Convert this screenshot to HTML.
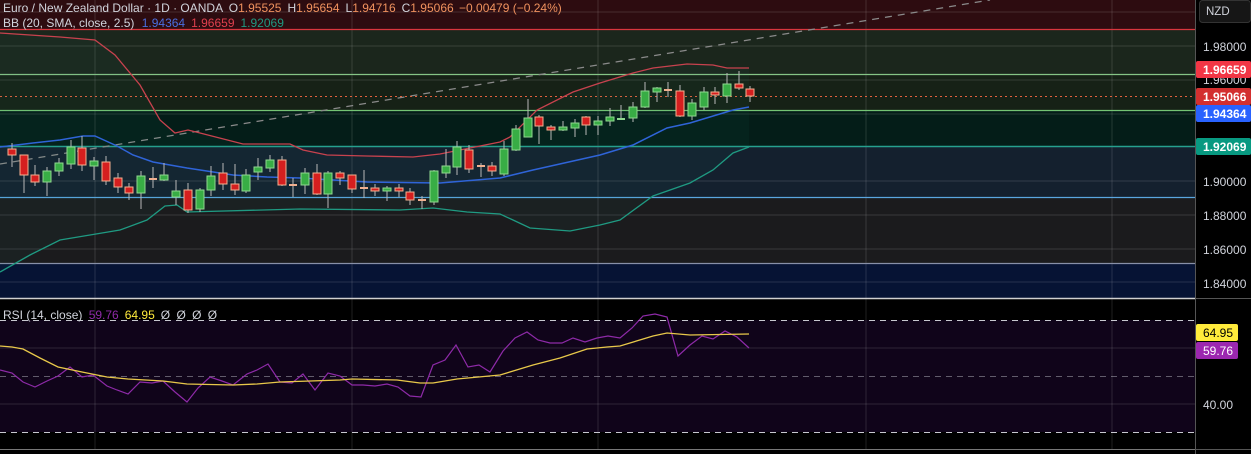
<!DOCTYPE html>
<html><head><meta charset="utf-8"><style>
html,body{margin:0;padding:0;background:#000;width:1251px;height:454px;overflow:hidden}
svg{display:block}
text{font-family:"Liberation Sans",sans-serif}
.w{stroke:#b8b8b8;stroke-width:1}
.g{fill:#38ad45;stroke:#8fd890;stroke-width:1}
.r{fill:#d51f1f;stroke:#f2b090;stroke-width:1}
.d{stroke:#f0b090;stroke-width:2}
.grid{stroke:#ffffff;stroke-opacity:.13;stroke-width:1}
</style></head><body>
<svg width="1251" height="454" viewBox="0 0 1251 454" xmlns="http://www.w3.org/2000/svg">
<rect x="0" y="0" width="1195" height="29" fill="#2d0c10"/>
<rect x="0" y="29" width="1195" height="45" fill="#1b261c"/>
<rect x="0" y="74" width="1195" height="36" fill="#162116"/>
<rect x="0" y="110" width="1195" height="36" fill="#041d18"/>
<rect x="0" y="146" width="1195" height="51" fill="#14202e"/>
<rect x="0" y="197" width="1195" height="66" fill="#1b1b1d"/>
<rect x="0" y="263" width="1195" height="35" fill="#061334"/>
<rect x="0" y="299" width="1195" height="155" fill="#000"/>
<rect x="0" y="320" width="1195" height="112" fill="#10041a"/>
<g class="grid">
<line x1="0" y1="12" x2="1195" y2="12"/><line x1="0" y1="46" x2="1195" y2="46"/><line x1="0" y1="80" x2="1195" y2="80"/><line x1="0" y1="114" x2="1195" y2="114"/><line x1="0" y1="181" x2="1195" y2="181"/><line x1="0" y1="215" x2="1195" y2="215"/><line x1="0" y1="249" x2="1195" y2="249"/><line x1="0" y1="282" x2="1195" y2="282"/>
<line x1="0" y1="348" x2="1195" y2="348"/><line x1="0" y1="404" x2="1195" y2="404"/>
<line x1="95" y1="0" x2="95" y2="449"/><line x1="352" y1="0" x2="352" y2="449"/><line x1="598" y1="0" x2="598" y2="449"/><line x1="866" y1="0" x2="866" y2="449"/><line x1="1112" y1="0" x2="1112" y2="449"/>
</g>
<line x1="0" y1="29.5" x2="1195" y2="29.5" stroke="#d9363e" stroke-width="1.2"/>
<line x1="0" y1="74.5" x2="1195" y2="74.5" stroke="#86c486" stroke-width="1.2"/>
<line x1="0" y1="110.5" x2="1195" y2="110.5" stroke="#74c474" stroke-width="1.2"/>
<line x1="0" y1="146.5" x2="1195" y2="146.5" stroke="#26a08e" stroke-width="1.5"/>
<line x1="0" y1="197.5" x2="1195" y2="197.5" stroke="#5aa6e0" stroke-width="1.2"/>
<line x1="0" y1="263.5" x2="1195" y2="263.5" stroke="#8890a8" stroke-width="1.2"/>
<line x1="0" y1="298.5" x2="1195" y2="298.5" stroke="#d0d0d0" stroke-width="1.5"/>
<line x1="0" y1="449.5" x2="1195" y2="449.5" stroke="#777" stroke-width="1"/>
<g stroke="#c8c8d0" stroke-dasharray="6,5" stroke-width="1">
<line x1="0" y1="320.5" x2="1195" y2="320.5"/><line x1="0" y1="432.5" x2="1195" y2="432.5"/>
<line x1="0" y1="376.5" x2="1195" y2="376.5" stroke-opacity=".45"/>
</g>
<line x1="0" y1="164" x2="990" y2="0" stroke="#8a8a8a" stroke-dasharray="7,6" stroke-width="1.3"/>
<line x1="0" y1="96.5" x2="1195" y2="96.5" stroke="#e2603e" stroke-dasharray="2,3" stroke-width="1"/>
<polygon fill="#2a8a7a" fill-opacity=".06" points="0,33 60,37 95,40 115,55 140,85 160,120 175,133 188,130 200,133 243,144 290,144 303,150 327,155 367,156 413,157 440,154 500,142 510,137 537,110 573,92 600,83 633,73 653,68 687,64 713,65 727,68 749,68 749,147 733,153 713,170 690,183 653,196 620,220 570,231 530,228 513,220 500,214 467,212 433,208 400,210 300,209 187,212 177,205 165,206 147,220 120,230 90,235 60,240 30,255 0,272"/>
<polyline fill="none" stroke="#c8424e" stroke-width="1.3" points="0,33 60,37 95,40 115,55 140,85 160,120 175,133 188,130 200,133 243,144 290,144 303,150 327,155 367,156 413,157 440,154 500,142 510,137 537,110 573,92 600,83 633,73 653,68 687,64 713,65 727,68 749,68"/>
<polyline fill="none" stroke="#2f64d8" stroke-width="1.5" points="0,147 33,143 60,140 83,136 95,136 117,146 133,155 153,162 187,168 233,175 267,177 300,178 333,180 367,182 440,183 500,178 533,170 600,155 633,145 667,128 690,123 733,110 749,107"/>
<polyline fill="none" stroke="#1f9a82" stroke-width="1.3" points="0,272 30,255 60,240 90,235 120,230 147,220 165,206 177,205 187,212 300,209 400,210 433,208 467,212 500,214 513,220 530,228 570,231 600,225 620,220 653,196 690,183 713,170 733,153 749,147"/>
<g>
<line class="w" x1="12" y1="143" x2="12" y2="167"/><rect class="r" x="8" y="149" width="8" height="6"/>
<line class="w" x1="24" y1="156" x2="24" y2="193"/><rect class="r" x="20" y="155" width="8" height="20"/>
<line class="w" x1="35" y1="165" x2="35" y2="186"/><rect class="r" x="31" y="175" width="8" height="7"/>
<line class="w" x1="47" y1="167" x2="47" y2="196"/><rect class="g" x="43" y="171" width="8" height="11"/>
<line class="w" x1="59" y1="158" x2="59" y2="176"/><rect class="g" x="55" y="163" width="8" height="8"/>
<line class="w" x1="71" y1="140" x2="71" y2="169"/><rect class="g" x="67" y="147" width="8" height="17"/>
<line class="w" x1="82" y1="136" x2="82" y2="171"/><rect class="r" x="78" y="148" width="8" height="17"/>
<line class="w" x1="94" y1="157" x2="94" y2="180"/><rect class="g" x="90" y="161" width="8" height="5"/>
<line class="w" x1="106" y1="156" x2="106" y2="185"/><rect class="r" x="102" y="162" width="8" height="19"/>
<line class="w" x1="118" y1="173" x2="118" y2="193"/><rect class="r" x="114" y="178" width="8" height="9"/>
<line class="w" x1="129" y1="183" x2="129" y2="200"/><rect class="r" x="125" y="187" width="8" height="6"/>
<line class="w" x1="141" y1="171" x2="141" y2="209"/><rect class="g" x="137" y="176" width="8" height="17"/>
<line class="w" x1="153" y1="167" x2="153" y2="188"/><line class="d" x1="149" y1="179" x2="157" y2="179"/>
<line class="w" x1="164" y1="163" x2="164" y2="181"/><rect class="g" x="160" y="175" width="8" height="5"/>
<line class="w" x1="176" y1="180" x2="176" y2="205"/><rect class="g" x="172" y="191" width="8" height="6"/>
<line class="w" x1="188" y1="183" x2="188" y2="213"/><rect class="r" x="184" y="190" width="8" height="20"/>
<line class="w" x1="200" y1="188" x2="200" y2="212"/><rect class="g" x="196" y="190" width="8" height="19"/>
<line class="w" x1="211" y1="166" x2="211" y2="196"/><rect class="g" x="207" y="176" width="8" height="14"/>
<line class="w" x1="223" y1="163" x2="223" y2="190"/><rect class="r" x="219" y="173" width="8" height="11"/>
<line class="w" x1="235" y1="164" x2="235" y2="195"/><rect class="r" x="231" y="184" width="8" height="6"/>
<line class="w" x1="246" y1="169" x2="246" y2="193"/><rect class="g" x="242" y="175" width="8" height="16"/>
<line class="w" x1="258" y1="158" x2="258" y2="180"/><rect class="g" x="254" y="167" width="8" height="5"/>
<line class="w" x1="270" y1="155" x2="270" y2="172"/><rect class="g" x="266" y="160" width="8" height="8"/>
<line class="w" x1="282" y1="156" x2="282" y2="186"/><rect class="r" x="278" y="160" width="8" height="25"/>
<line class="w" x1="293" y1="178" x2="293" y2="197"/><line class="d" x1="289" y1="185" x2="297" y2="185"/>
<line class="w" x1="305" y1="168" x2="305" y2="194"/><rect class="g" x="301" y="173" width="8" height="12"/>
<line class="w" x1="317" y1="164" x2="317" y2="195"/><rect class="r" x="313" y="173" width="8" height="21"/>
<line class="w" x1="328" y1="171" x2="328" y2="208"/><rect class="g" x="324" y="173" width="8" height="21"/>
<line class="w" x1="340" y1="171" x2="340" y2="185"/><rect class="r" x="336" y="173" width="8" height="5"/>
<line class="w" x1="352" y1="175" x2="352" y2="193"/><rect class="r" x="348" y="175" width="8" height="14"/>
<line class="w" x1="364" y1="170" x2="364" y2="198"/><line class="d" x1="360" y1="188" x2="368" y2="188"/>
<line class="w" x1="375" y1="184" x2="375" y2="196"/><rect class="r" x="371" y="188" width="8" height="3"/>
<line class="w" x1="387" y1="186" x2="387" y2="201"/><rect class="g" x="383" y="188" width="8" height="3"/>
<line class="w" x1="399" y1="184" x2="399" y2="197"/><rect class="r" x="395" y="188" width="8" height="3"/>
<line class="w" x1="410" y1="188" x2="410" y2="205"/><rect class="r" x="406" y="192" width="8" height="8"/>
<line class="w" x1="422" y1="196" x2="422" y2="209"/><line class="d" x1="418" y1="200" x2="426" y2="200"/>
<line class="w" x1="434" y1="170" x2="434" y2="205"/><rect class="g" x="430" y="171" width="8" height="31"/>
<line class="w" x1="446" y1="149" x2="446" y2="178"/><rect class="g" x="442" y="166" width="8" height="7"/>
<line class="w" x1="457" y1="141" x2="457" y2="175"/><rect class="g" x="453" y="147" width="8" height="20"/>
<line class="w" x1="469" y1="145" x2="469" y2="173"/><rect class="r" x="465" y="150" width="8" height="19"/>
<line class="w" x1="481" y1="163" x2="481" y2="177"/><line class="d" x1="477" y1="166" x2="485" y2="166"/>
<line class="w" x1="492" y1="162" x2="492" y2="176"/><rect class="r" x="488" y="166" width="8" height="5"/>
<line class="w" x1="504" y1="141" x2="504" y2="176"/><rect class="g" x="500" y="149" width="8" height="25"/>
<line class="w" x1="516" y1="125" x2="516" y2="151"/><rect class="g" x="512" y="129" width="8" height="21"/>
<line class="w" x1="528" y1="99" x2="528" y2="137"/><rect class="g" x="524" y="118" width="8" height="19"/>
<line class="w" x1="539" y1="115" x2="539" y2="144"/><rect class="r" x="535" y="117" width="8" height="9"/>
<line class="w" x1="551" y1="125" x2="551" y2="140"/><rect class="r" x="547" y="127" width="8" height="3"/>
<line class="w" x1="563" y1="121" x2="563" y2="131"/><rect class="g" x="559" y="127" width="8" height="3"/>
<line class="w" x1="575" y1="119" x2="575" y2="137"/><rect class="g" x="571" y="123" width="8" height="5"/>
<line class="w" x1="586" y1="116" x2="586" y2="135"/><rect class="r" x="582" y="117" width="8" height="8"/>
<line class="w" x1="598" y1="116" x2="598" y2="135"/><rect class="g" x="594" y="121" width="8" height="4"/>
<line class="w" x1="610" y1="108" x2="610" y2="126"/><rect class="g" x="606" y="117" width="8" height="4"/>
<line class="w" x1="621" y1="105" x2="621" y2="120"/><line x1="617" y1="119" x2="625" y2="119" style="stroke:#8fd890;stroke-width:2"/>
<line class="w" x1="633" y1="102" x2="633" y2="122"/><rect class="g" x="629" y="107" width="8" height="11"/>
<line class="w" x1="645" y1="82" x2="645" y2="108"/><rect class="g" x="641" y="91" width="8" height="16"/>
<line class="w" x1="657" y1="87" x2="657" y2="102"/><rect class="g" x="653" y="88" width="8" height="4"/>
<line class="w" x1="668" y1="82" x2="668" y2="97"/><line class="d" x1="664" y1="90" x2="672" y2="90"/>
<line class="w" x1="680" y1="85" x2="680" y2="117"/><rect class="r" x="676" y="91" width="8" height="25"/>
<line class="w" x1="692" y1="99" x2="692" y2="120"/><rect class="g" x="688" y="103" width="8" height="13"/>
<line class="w" x1="704" y1="87" x2="704" y2="110"/><rect class="g" x="700" y="92" width="8" height="15"/>
<line class="w" x1="715" y1="87" x2="715" y2="104"/><rect class="r" x="711" y="92" width="8" height="3"/>
<line class="w" x1="727" y1="73" x2="727" y2="103"/><rect class="g" x="723" y="84" width="8" height="12"/>
<line class="w" x1="739" y1="71" x2="739" y2="90"/><rect class="r" x="735" y="84" width="8" height="4"/>
<line class="w" x1="750" y1="86" x2="750" y2="102"/><rect class="r" x="746" y="89" width="8" height="7"/>
</g>
<polyline fill="none" stroke="#8e2aa8" stroke-width="1.2" points="0,370 12,373 23,382 35,387 47,381 58,376 70,367 82,377 93,375 107,386 117,390 128,394 140,382 152,383 163,381 175,392 187,402 198,388 210,377 222,381 233,385 247,374 257,370 268,364 280,382 292,383 303,374 315,390 328,373 340,376 352,385 363,385 375,386 387,384 398,387 410,396 421,397 433,365 445,360 456,345 468,367 479,365 490,372 503,351 515,338 527,332 538,340 550,343 562,343 573,338 585,342 597,338 608,336 620,338 632,328 643,316 655,314 667,317 678,356 690,345 702,336 713,339 725,331 737,337 749,348"/>
<polyline fill="none" stroke="#e8c84a" stroke-width="1.3" points="0,346 12,347 23,349 40,358 58,367 82,372 107,377 128,379 163,381 187,384 233,385 257,384 280,382 340,380 352,379 397,380 420,383 433,383 457,379 500,375 533,365 560,358 587,349 607,347 620,346 653,336 667,333 690,335 749,334"/>
<rect x="1195" y="0" width="56" height="454" fill="#000"/>
<line x1="1195.5" y1="0" x2="1195.5" y2="454" stroke="#555" stroke-width="1"/>
<line x1="1195" y1="298.5" x2="1251" y2="298.5" stroke="#555"/>
<line x1="1195" y1="449.5" x2="1251" y2="449.5" stroke="#555"/>
<rect x="1199.5" y="0.5" width="51" height="22" rx="3" fill="#161616" stroke="#333"/>
<text x="1206" y="15" font-size="11.5" fill="#d1d4dc">NZD</text>
<g font-size="12" fill="#d1d4dc">
<text x="1203" y="51">1.98000</text>
<text x="1203" y="84">1.96000</text>
<text x="1203" y="186">1.90000</text>
<text x="1203" y="220">1.88000</text>
<text x="1203" y="254">1.86000</text>
<text x="1203" y="288">1.84000</text>
<text x="1203" y="409">40.00</text>
</g>
<rect x="1196" y="61" width="55" height="17" rx="2" fill="#f23645"/>
<rect x="1196" y="88" width="55" height="17" rx="2" fill="#d32f2f"/>
<rect x="1196" y="105" width="55" height="17" rx="2" fill="#2962ff"/>
<rect x="1196" y="138" width="55" height="17" rx="2" fill="#089981"/>
<g font-size="12" fill="#fff" font-weight="bold">
<text x="1203" y="74">1.96659</text>
<text x="1203" y="101">1.95066</text>
<text x="1203" y="118">1.94364</text>
<text x="1203" y="151">1.92069</text>
</g>
<rect x="1196" y="324" width="42" height="17" rx="2" fill="#ffeb3b"/>
<rect x="1196" y="342" width="42" height="17" rx="2" fill="#9c27b0"/>
<text x="1203" y="337" font-size="12" fill="#000">64.95</text>
<text x="1203" y="355" font-size="12" fill="#fff">59.76</text>
<g font-size="12">
<text x="3" y="12" fill="#d1d4dc">Euro / New Zealand Dollar · 1D · OANDA <tspan dx="3">O</tspan><tspan fill="#f0925e">1.95525</tspan><tspan dx="6">H</tspan><tspan fill="#f0925e">1.95654</tspan><tspan dx="6">L</tspan><tspan fill="#f0925e">1.94716</tspan><tspan dx="6">C</tspan><tspan fill="#f0925e">1.95066 <tspan dx="2">−0.00479 (−0.24%)</tspan></tspan></text>
<text x="3" y="27" fill="#d1d4dc">BB (20, SMA, close, 2.5) <tspan dx="4" fill="#4a6ee0">1.94364</tspan><tspan dx="6" fill="#e0404e">1.96659</tspan><tspan dx="6" fill="#1f9a82">1.92069</tspan></text>
<text x="3" y="319" fill="#d1d4dc">RSI (14, close) <tspan dx="3" fill="#8e2aa8">59.76</tspan><tspan dx="6" fill="#ffeb3b">64.95</tspan><tspan dx="6">Ø </tspan><tspan dx="3">Ø </tspan><tspan dx="3">Ø </tspan><tspan dx="3">Ø</tspan></text>
</g>
</svg>
</body></html>
